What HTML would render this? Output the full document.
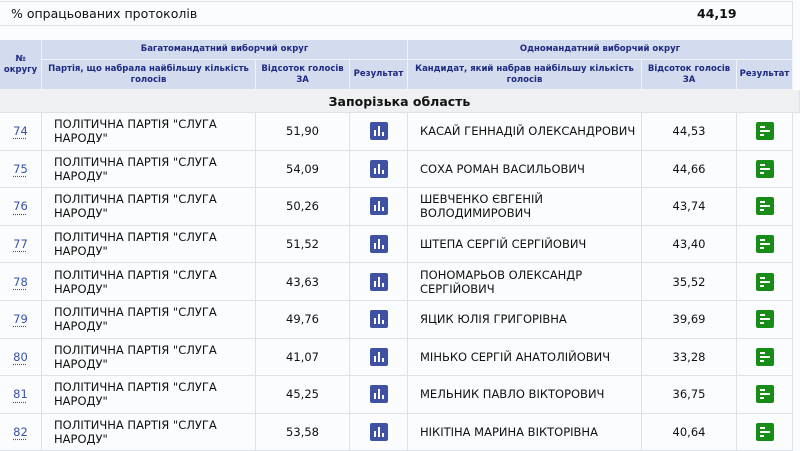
<!DOCTYPE html>
<html><head><meta charset="utf-8">
<style>
*{margin:0;padding:0;box-sizing:border-box}
body{width:800px;height:451px;overflow:hidden;background:#fafcfd;font-family:"DejaVu Sans","Liberation Sans",sans-serif;color:#111;position:relative}
.c{position:absolute;display:flex;align-items:center;justify-content:center;text-align:center;border-right:1px solid #dde2e6;border-bottom:1px solid #dde2e6}
.h{background:#d3dcef;color:#1d2a80;font-weight:bold;font-size:8.5px;line-height:11px;border-color:#f0f3f8}
.d{font-size:11.5px;line-height:14px}
.l{justify-content:flex-start;text-align:left;padding-left:12px}
.n{color:#3a52a8;text-decoration:underline dotted;text-underline-offset:3px}
.bi{width:18px;height:18px;background:#3f51a3;border-radius:2px;position:relative}
.bi i{position:absolute;bottom:4px;width:2px;background:#fff}
.gi{width:18px;height:18px;background:#178d17;border-radius:2px;position:relative}
.gi i{position:absolute;left:4px;height:2px;background:#fff}
</style></head><body>
<div style="position:absolute;left:0;top:1px;width:793px;height:25px;border:1px solid #dde2e6;border-left:none;font-size:12.5px;line-height:23px;padding-left:11px">% опрацьованих протоколів<span style="position:absolute;left:697px;font-weight:bold">44,19</span></div>
<div style="position:absolute;left:0;top:26px;width:793px;height:14px;border-right:1px solid #dde2e6"></div>

<div class="c h" style="left:0;top:40px;width:42px;height:50px">№<br>округу</div>
<div class="c h" style="left:42px;top:40px;width:366px;height:20px">Багатомандатний виборчий округ</div>
<div class="c h" style="left:408px;top:40px;width:385px;height:20px">Одномандатний виборчий округ</div>
<div class="c h" style="left:42px;top:60px;width:214px;height:30px">Партія, що набрала найбільшу кількість<br>голосів</div>
<div class="c h" style="left:256px;top:60px;width:94px;height:30px">Відсоток голосів<br>ЗА</div>
<div class="c h" style="left:350px;top:60px;width:58px;height:30px">Результат</div>
<div class="c h" style="left:408px;top:60px;width:234px;height:30px">Кандидат, який набрав найбільшу кількість<br>голосів</div>
<div class="c h" style="left:642px;top:60px;width:95px;height:30px">Відсоток голосів<br>ЗА</div>
<div class="c h" style="left:737px;top:60px;width:56px;height:30px">Результат</div>
<div class="c" style="left:0;top:90px;width:800px;height:23px;background:#eff0f1;font-weight:bold;font-size:12.5px">Запорізька область</div>

<div id="rows"></div>
<script>
var R=[["74","51,90","КАСАЙ ГЕННАДІЙ ОЛЕКСАНДРОВИЧ","44,53"],["75","54,09","СОХА РОМАН ВАСИЛЬОВИЧ","44,66"],["76","50,26","ШЕВЧЕНКО ЄВГЕНІЙ<br>ВОЛОДИМИРОВИЧ","43,74"],["77","51,52","ШТЕПА СЕРГІЙ СЕРГІЙОВИЧ","43,40"],["78","43,63","ПОНОМАРЬОВ ОЛЕКСАНДР<br>СЕРГІЙОВИЧ","35,52"],["79","49,76","ЯЦИК ЮЛІЯ ГРИГОРІВНА","39,69"],["80","41,07","МІНЬКО СЕРГІЙ АНАТОЛІЙОВИЧ","33,28"],["81","45,25","МЕЛЬНИК ПАВЛО ВІКТОРОВИЧ","36,75"],["82","53,58","НІКІТІНА МАРИНА ВІКТОРІВНА","40,64"]];
var h="";
R.forEach(function(r,i){var t=113+i*37.6,H=37.6;
function c(l,w,x,cls){h+='<div class="c d '+(cls||'')+'" style="left:'+l+'px;top:'+t+'px;width:'+w+'px;height:'+H+'px">'+x+'</div>';}
c(0,42,'<span class="n">'+r[0]+'</span>');
c(42,214,'ПОЛІТИЧНА ПАРТІЯ "СЛУГА<br>НАРОДУ"','l');
c(256,94,r[1]);
c(350,58,'<div class="bi"><i style="left:4px;height:6px"></i><i style="left:8px;height:10px"></i><i style="left:12px;height:4px"></i></div>');
c(408,234,r[2],'l');
c(642,95,r[3]);
c(737,56,'<div class="gi"><i style="top:4px;width:5px"></i><i style="top:8px;width:10px"></i><i style="top:12px;width:4px"></i></div>');
});
document.getElementById("rows").innerHTML=h;
</script>
</body></html>
